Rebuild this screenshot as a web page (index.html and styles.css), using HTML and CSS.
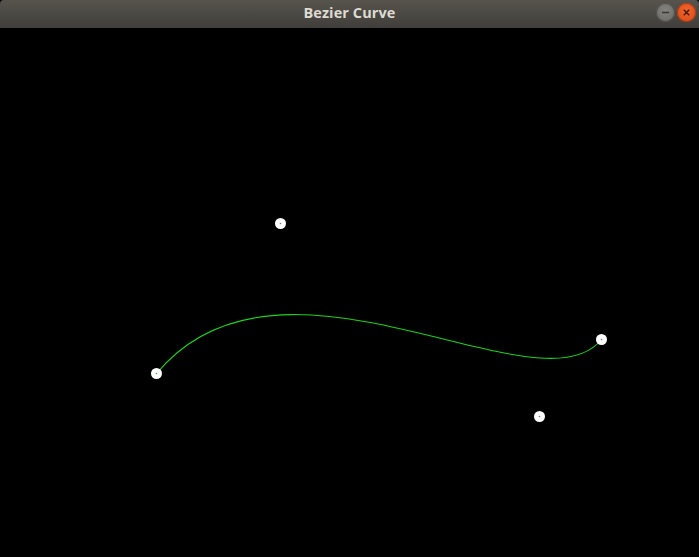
FILE: index.html
```html
<!DOCTYPE html>
<html>
<head>
<meta charset="utf-8">
<title>Bezier Curve</title>
<link rel="stylesheet" href="styles.css">
</head>
<body>
<div class="window">
  <header class="titlebar">
    <span class="title">Bezier Curve</span>
    <div class="controls">
      <span class="btn btn-min">
        <svg width="19" height="19" viewBox="0 0 19 19"><line x1="6" y1="9.5" x2="13" y2="9.5" stroke="#3a3a37" stroke-width="1.6"/></svg>
      </span>
      <span class="btn btn-close">
        <svg width="19" height="19" viewBox="0 0 19 19"><path d="M6.8 6.8 L12.2 12.2 M12.2 6.8 L6.8 12.2" stroke="#4a1a0a" stroke-width="1.5" fill="none"/></svg>
      </span>
    </div>
  </header>
  <main class="canvas">
    <svg class="scene" width="699" height="529" viewBox="0 0 699 529">
      <path d="M156.5 345.5 C280.5 195.5 539.5 388.5 601.5 311.5" stroke="#1ed21e" stroke-width="1.1" fill="none"/>
      <g fill="#ffffff">
        <circle cx="156.5" cy="345.5" r="5.5"/>
        <circle cx="280.5" cy="195.5" r="5.5"/>
        <circle cx="539.5" cy="388.5" r="5.5"/>
        <circle cx="601.5" cy="311.5" r="5.5"/>
      </g>
      <g fill="#777">
        <circle cx="280.5" cy="195.5" r="0.8"/>
        <circle cx="539.5" cy="388.5" r="0.8"/>
        <circle cx="601.5" cy="311.5" r="0.8"/>
      </g>
      <circle cx="156.5" cy="345.5" r="0.8" fill="#3aa63a"/>
    </svg>
  </main>
</div>
</body>
</html>
```
FILE: styles.css
```css
html, body {
  margin: 0;
  padding: 0;
  background: #000;
}
.window {
  width: 699px;
  height: 557px;
  display: flex;
  flex-direction: column;
  overflow: hidden;
}
.titlebar {
  height: 28px;
  box-sizing: border-box;
  padding-bottom: 3px;
  flex: none;
  position: relative;
  display: flex;
  align-items: center;
  justify-content: center;
  background: linear-gradient(#57544e, #403e3a);
  border-radius: 4px 4px 0 0;
}
.title {
  font-family: "Open Sans", "DejaVu Sans", sans-serif;
  font-weight: 700;
  font-size: 14.5px;
  color: #dfdbd2;
  letter-spacing: 0.1px;
}
.controls {
  position: absolute;
  right: 3px;
  top: 3px;
  display: flex;
  gap: 2px;
}
.btn {
  width: 19px;
  height: 19px;
  border-radius: 50%;
  display: block;
}
.btn svg { display: block; }
.btn-min {
  background: radial-gradient(circle at 50% 40%, #84837f, #676662);
  box-shadow: inset 0 0 0 1px #4f4d49;
}
.btn-close {
  background: radial-gradient(circle at 50% 40%, #f0652f, #d94814);
  box-shadow: inset 0 0 0 1px #a93b12;
}
.canvas {
  flex: 1;
  background: #000;
}
.scene { display: block; }
```
